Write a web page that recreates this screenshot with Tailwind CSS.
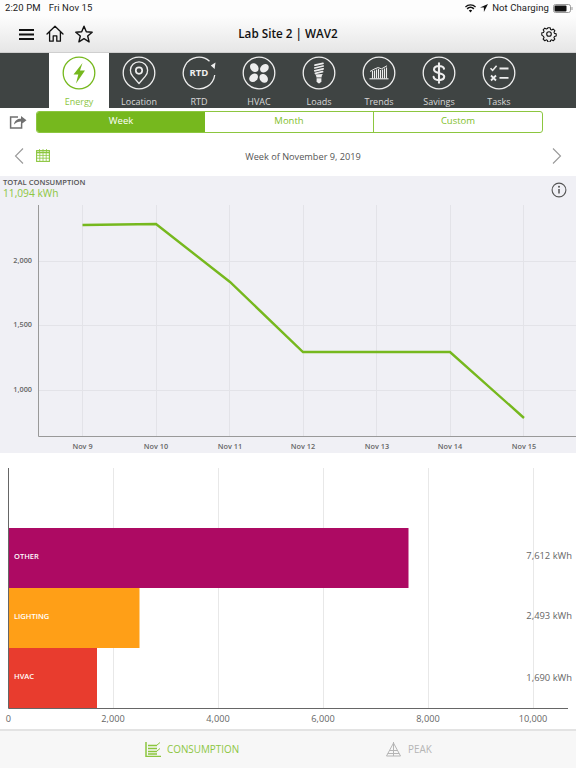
<!DOCTYPE html>
<html lang="en">
<head>
<meta charset="UTF-8">
<title>Lab Site 2 | WAV2</title>
<script src="https://cdn.jsdelivr.net/npm/@tailwindcss/browser@4"></script>
</head>
<body class="w-[576px] h-[768px] overflow-hidden bg-white font-['Open_Sans',sans-serif]">

<!-- status bar + header -->
<div class="h-[53px] bg-gradient-to-b from-[#fdfdfd] from-30% to-[#e6e6e6] border-b border-[#cfcfcf]">
  <div class="h-[16px] flex items-center justify-between pl-[5px] pr-[3px] text-[9.5px] leading-none text-[#222] font-['Roboto',sans-serif] tracking-[0.1px]">
    <div class="flex gap-[8px]"><span>2:20 PM</span><span>Fri Nov 15</span></div>
    <div class="flex items-center gap-[4px]">
      <svg width="11" height="9" viewBox="0 0 11 9"><path d="M5.5 8.5 3.8 6.6a2.4 2.4 0 0 1 3.4 0zM2.7 5.4 1.6 4.2a5.6 5.6 0 0 1 7.8 0L8.3 5.4a4 4 0 0 0-5.6 0zM.9 3.4 0 2.4a7.9 7.9 0 0 1 11 0l-.9 1a6.6 6.6 0 0 0-9.2 0z" fill="#111"/></svg>
      <svg width="8" height="8" viewBox="0 0 8 8"><path d="M8 0 0 3.6h3.9V8z" fill="#111"/></svg>
      <span>Not Charging</span>
      <svg width="20" height="9" viewBox="0 0 20 9"><rect x=".5" y=".5" width="17" height="8" rx="2" fill="none" stroke="#999"/><rect x="1.5" y="1.5" width="12" height="6" rx="1" fill="#111"/><rect x="18.5" y="3" width="1" height="3" fill="#999"/></svg>
    </div>
  </div>
  <div class="h-[36px] relative flex items-center pl-[19px] pr-[19px]">
    <svg width="15" height="11" viewBox="0 0 15 11"><path d="M0 1h15M0 5.5h15M0 10h15" stroke="#111" stroke-width="2"/></svg>
    <svg width="18" height="18" viewBox="0 0 18 18" class="ml-[12px]"><path d="M1 9 9 1.2 17 9M3.6 7v9.2h3.6v-5.4h3.6v5.4h3.6V7" fill="none" stroke="#111" stroke-width="1.3" stroke-linejoin="round" stroke-linecap="round"/></svg>
    <svg width="18" height="18" viewBox="0 0 18 18" class="ml-[11px]"><path d="M9 1.2 11.3 6.7 17.2 7.2 12.7 11 14.1 16.8 9 13.7 3.9 16.8 5.3 11 .8 7.2 6.7 6.7z" fill="none" stroke="#111" stroke-width="1.4" stroke-linejoin="round"/></svg>
    <div class="absolute left-0 right-0 text-center text-[11.7px] font-semibold text-[#111] pointer-events-none">Lab Site 2 | WAV2</div>
    <svg width="16" height="16" viewBox="0 0 16 16" class="ml-auto"><path d="M6.7 1h2.6l.4 1.9 1.3.6 1.7-1 1.8 1.8-1 1.7.6 1.3 1.9.4v2.6l-1.9.4-.6 1.3 1 1.7-1.8 1.8-1.7-1-1.3.6-.4 1.9H6.7l-.4-1.9-1.3-.6-1.7 1-1.8-1.8 1-1.7-.6-1.3L0 9.3V6.7l1.9-.4.6-1.3-1-1.7 1.8-1.8 1.7 1 1.3-.6z" transform="translate(.8 .8) scale(.9)" fill="none" stroke="#111" stroke-width="1.2" stroke-linejoin="round"/><circle cx="8" cy="8" r="2.3" fill="none" stroke="#111" stroke-width="1.1"/></svg>
  </div>
</div>

<!-- module tabs -->
<div class="h-[55px] bg-[#3f4443] flex pl-[49px] text-[9px] leading-none text-[#d8d8d8]">
  <div class="w-[60px] bg-white flex flex-col items-center pt-[2.5px] text-[#8cc63f]">
    <svg width="34" height="34" viewBox="0 0 34 34"><circle cx="17" cy="17" r="15.8" fill="none" stroke="#76b81e" stroke-width="1.3"/><path d="M20.5 7 11.500 18.500h4.800L14 27.500 23 14.500h-5z" fill="#76b81e"/></svg>
    <span class="mt-[7.5px]">Energy</span>
  </div>
  <div class="w-[60px] flex flex-col items-center pt-[2.5px]">
    <svg width="34" height="34" viewBox="0 0 34 34"><circle cx="17" cy="17" r="15.8" fill="none" stroke="#eee" stroke-width="1.3"/><path d="M17 27.5 10.800 20.400a8.600 8.600 0 1 1 12.400 0z" fill="none" stroke="#eee" stroke-width="1.3" stroke-linejoin="round"/><circle cx="17" cy="14.600" r="3.200" fill="none" stroke="#eee" stroke-width="1.700"/></svg>
    <span class="mt-[7.5px]">Location</span>
  </div>
  <div class="w-[60px] flex flex-col items-center pt-[2.5px]">
    <div class="relative w-[34px] h-[34px]">
      <svg width="34" height="34" viewBox="0 0 34 34"><path d="M32.700 19A15.800 15.800 0 1 1 27.500 5.200" fill="none" stroke="#eee" stroke-width="1.3"/><path d="M28.800 9.500 33.500 6.500 32.600 13z" fill="#eee"/></svg>
      <span class="absolute inset-0 flex items-center justify-center text-[9.5px] font-bold text-[#eee]">RTD</span>
    </div>
    <span class="mt-[7.5px]">RTD</span>
  </div>
  <div class="w-[60px] flex flex-col items-center pt-[2.5px]">
    <svg width="34" height="34" viewBox="0 0 34 34"><circle cx="17" cy="17" r="15.800" fill="none" stroke="#eee" stroke-width="1.3"/><g fill="#eee"><ellipse cx="12.300" cy="11.600" rx="3.800" ry="4.800" transform="rotate(-42 12.300 11.600)"/><ellipse cx="22.400" cy="12.300" rx="3.800" ry="4.800" transform="rotate(48 22.400 12.300)"/><ellipse cx="21.700" cy="22.400" rx="3.800" ry="4.800" transform="rotate(-42 21.700 22.400)"/><ellipse cx="11.600" cy="21.700" rx="3.800" ry="4.800" transform="rotate(48 11.600 21.700)"/></g><circle cx="17" cy="17" r="1.100" fill="#3f4443"/></svg>
    <span class="mt-[7.5px]">HVAC</span>
  </div>
  <div class="w-[60px] flex flex-col items-center pt-[2.5px]">
    <svg width="34" height="34" viewBox="0 0 34 34"><circle cx="17" cy="17" r="15.800" fill="none" stroke="#eee" stroke-width="1.3"/><path d="M13 9.200 21 7.300M12.800 12 21.200 10M12.800 14.800 21.200 12.800M13.400 17.400 20.600 15.600" stroke="#eee" stroke-width="1.700" stroke-linecap="round"/><path d="M13.200 18.600C14.200 19.600 14.400 20.600 14.400 21.600h5.200C19.600 20.600 19.800 19.200 20.800 18z" fill="#eee"/><path d="M14.600 22.300h4.800v3.200l-1.600 1.700h-1.600l-1.600-1.700z" fill="#eee"/></svg>
    <span class="mt-[7.5px]">Loads</span>
  </div>
  <div class="w-[60px] flex flex-col items-center pt-[2.5px]">
    <svg width="34" height="34" viewBox="0 0 34 34"><circle cx="17" cy="17" r="15.800" fill="none" stroke="#eee" stroke-width="1.3"/><path d="M8 15.500 12 13.200 16 11.600 19.500 12.800 25 9.800" fill="none" stroke="#eee" stroke-width="1"/><path d="M10.500 15v7.500M12.500 14.500v8M14.500 13.500v9M16.500 13v9.500M18.500 14v8.500M20.500 13.500v9M22.500 12.500v10M24.500 11.500v11" stroke="#eee" stroke-width="1.100"/><path d="M7.500 22.800h19" stroke="#eee" stroke-width="1.100"/></svg>
    <span class="mt-[7.5px]">Trends</span>
  </div>
  <div class="w-[60px] flex flex-col items-center pt-[2.5px]">
    <svg width="34" height="34" viewBox="0 0 34 34"><circle cx="17" cy="17" r="15.800" fill="none" stroke="#eee" stroke-width="1.3"/><path d="M22 12.800C21.600 10.900 19.600 10 17 10c-2.900 0-5 1.400-5 3.600 0 5 10.200 2.200 10.200 7 0 2.200-2.200 3.500-5.200 3.500-2.900 0-5-1-5.400-3.200M17 7.200v19.600" fill="none" stroke="#eee" stroke-width="2.100" stroke-linecap="round"/></svg>
    <span class="mt-[7.5px]">Savings</span>
  </div>
  <div class="w-[60px] flex flex-col items-center pt-[2.5px]">
    <svg width="34" height="34" viewBox="0 0 34 34"><circle cx="17" cy="17" r="15.800" fill="none" stroke="#eee" stroke-width="1.3"/><path d="M8.500 12.300 10.600 14.400 14.600 9.800" fill="none" stroke="#eee" stroke-width="1.600"/><path d="M9 19.500 14 24.500M14 19.500 9 24.500" stroke="#eee" stroke-width="1.800"/><path d="M17.500 12.500h9M17.500 21.800h9" stroke="#eee" stroke-width="1.800"/></svg>
    <span class="mt-[7.5px]">Tasks</span>
  </div>
</div>

<!-- range selector -->
<div class="h-[27px] flex items-center pl-[9px]">
  <svg width="18" height="15" viewBox="0 0 18 15"><path d="M9 3H1.600v10.900h11V9.500" fill="none" stroke="#707070" stroke-width="1.500"/><path d="M5 10.500C5.400 6.800 8.400 4.800 12 4.800V2l5.500 4.200L12 10.400V7.500c-3 0-5 1-7 3z" fill="#707070"/></svg>
  <div class="ml-[9px] w-[507px] h-[22px] flex border border-[#8cc63f] rounded-[3px] text-[9.5px] text-[#7fc02a] overflow-hidden">
    <div class="w-[168px] bg-[#76b81e] text-white flex items-center justify-center">Week</div>
    <div class="w-[169px] flex items-center justify-center border-r border-[#8cc63f]">Month</div>
    <div class="flex-1 flex items-center justify-center">Custom</div>
  </div>
</div>

<!-- date row -->
<div class="h-[41px] flex items-center pl-[14px] pr-[14px] relative">
  <svg width="10" height="16" viewBox="0 0 10 16"><path d="M9 .5 1.500 8 9 15.500" fill="none" stroke="#999" stroke-width="1.100"/></svg>
  <svg width="14" height="13" viewBox="0 0 14 13" class="ml-[12px]"><rect x=".6" y="1.600" width="12.800" height="10.800" fill="none" stroke="#8cc63f" stroke-width="1.100"/><path d="M.6 3.500h12.800" stroke="#8cc63f" stroke-width="1.600"/><path d="M3.500 0v3M7 0v3M10.500 0v3M.6 6.400h12.800M.6 9.200h12.800M3.800 4v8M7 4v8M10.200 4v8" stroke="#8cc63f" stroke-width=".8"/></svg>
  <span class="absolute left-[30px] right-0 pt-[2px] text-center text-[9.2px] text-[#555]">Week of November 9, 2019</span>
  <svg width="10" height="16" viewBox="0 0 10 16" class="ml-auto"><path d="M1 .5 8.500 8 1 15.500" fill="none" stroke="#999" stroke-width="1.100"/></svg>
</div>

<!-- line chart -->
<div class="h-[277px] bg-[#f0f0f5] relative">
  <div class="pl-[3px] pt-[1px]">
    <div class="text-[7.6px] leading-[10px] font-semibold text-[#555]">TOTAL CONSUMPTION</div>
    <div class="text-[10.2px] leading-[13px] text-[#8cc63f]">11,094 kWh</div>
  </div>
  <svg width="16" height="16" viewBox="0 0 16 16" class="absolute left-[551px] top-[6px]"><circle cx="8" cy="8" r="6.900" fill="none" stroke="#555" stroke-width="1.100"/><path d="M8 7v4.600" stroke="#555" stroke-width="1.500"/><circle cx="8" cy="4.700" r="1" fill="#555"/></svg>
  <svg width="576" height="277" viewBox="0 176 576 277" class="absolute left-0 top-0 font-['Open_Sans',sans-serif]">
    <g stroke="#e3e3e8" stroke-width="1">
      <path d="M39 261.500H576M39 325.500H576M39 390.500H576"/>
      <path d="M82.500 205V437M156.500 205V437M229.500 205V437M303.500 205V437M376.500 205V437M450.500 205V437M523.500 205V437"/>
    </g>
    <path d="M38.500 205V436.500H576" fill="none" stroke="#999" stroke-width="1"/>
    <path d="M82.500 225 156 224 230 282 303 352H450L524 418" fill="none" stroke="#76b81e" stroke-width="2.400"/>
    <g font-size="7.300" font-weight="600" fill="#666" text-anchor="end">
      <text x="32" y="263">2,000</text>
      <text x="32" y="327">1,500</text>
      <text x="32" y="391.500">1,000</text>
    </g>
    <g font-size="7.300" font-weight="600" fill="#666" text-anchor="middle">
      <text x="82.500" y="448.500">Nov 9</text>
      <text x="156" y="448.500">Nov 10</text>
      <text x="230" y="448.500">Nov 11</text>
      <text x="303" y="448.500">Nov 12</text>
      <text x="377" y="448.500">Nov 13</text>
      <text x="450" y="448.500">Nov 14</text>
      <text x="524" y="448.500">Nov 15</text>
    </g>
  </svg>
</div>

<!-- category bars -->
<div class="h-[276px] relative">
  <svg width="576" height="276" viewBox="0 453 576 276" class="absolute left-0 top-0 font-['Open_Sans',sans-serif]">
    <path d="M113.500 468V708M218.500 468V708M323.500 468V708M428.500 468V708M533.500 468V708" stroke="#e8e8e8" stroke-width="1"/>
    <rect x="9" y="528" width="399.500" height="60" fill="#ad0a63"/>
    <rect x="9" y="588" width="130.500" height="60" fill="#ff9f17"/>
    <rect x="9" y="648" width="88" height="60" fill="#e83c2e"/>
    <path d="M8.500 468V708.500H568" fill="none" stroke="#666" stroke-width="1"/>
    <g font-size="7.500" font-weight="600" fill="#fff">
      <text x="14" y="558.500">OTHER</text>
      <text x="14" y="618.500">LIGHTING</text>
      <text x="14" y="678.500">HVAC</text>
    </g>
    <g font-size="9.400" fill="#666" text-anchor="end">
      <text x="572" y="559">7,612 kWh</text>
      <text x="572" y="619">2,493 kWh</text>
      <text x="572" y="681">1,690 kWh</text>
    </g>
    <g font-size="9.200" fill="#666" text-anchor="middle">
      <text x="8.500" y="722">0</text>
      <text x="113" y="722">2,000</text>
      <text x="218" y="722">4,000</text>
      <text x="323" y="722">6,000</text>
      <text x="428" y="722">8,000</text>
      <text x="533" y="722">10,000</text>
    </g>
  </svg>
</div>

<!-- bottom tabs -->
<div class="h-[39px] bg-[#f7f7f7] border-t-2 border-[#e3e3e3] flex text-[9.9px] leading-none">
  <div class="w-[288px] flex items-center pl-[145px] text-[#8cc63f]">
    <svg width="16" height="15" viewBox="0 0 16 15"><path d="M1 0v14.500h15" fill="none" stroke="#8cc63f" stroke-width="1.500"/><path d="M3 3.500h9M3 6.500h9M3 9.500h9M3 12h9" stroke="#8cc63f" stroke-width="1.500"/><path d="M11.500 3.500 15 .5M12 9 15 6.500" stroke="#8cc63f" stroke-width="1"/></svg>
    <span class="ml-[6px]">CONSUMPTION</span>
  </div>
  <div class="flex-1 flex items-center pl-[98px] text-[#b5b5b5]">
    <svg width="15" height="15" viewBox="0 0 15 15"><path d="M7.500 0V14M7.500 1 .5 14H14.500zM3.500 8.500h8M1.800 11.500h11.400" fill="none" stroke="#b5b5b5" stroke-width="1"/></svg>
    <span class="ml-[7px]">PEAK</span>
  </div>
</div>

</body>
</html>
